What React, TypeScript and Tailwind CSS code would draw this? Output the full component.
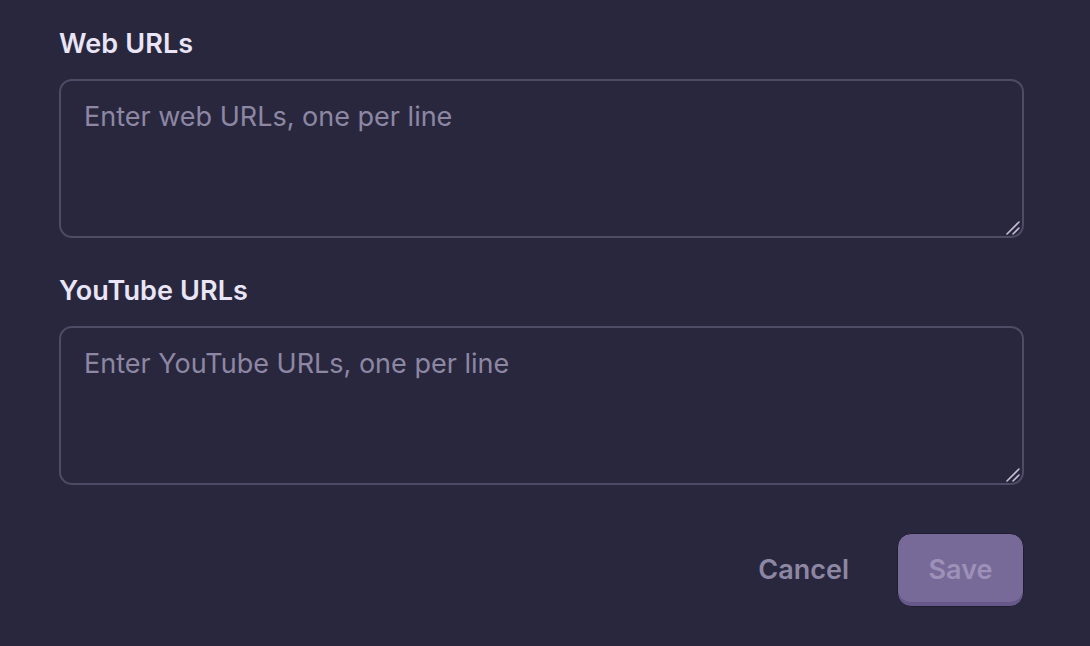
import React, { useState } from "react";

function UrlField({
  label,
  placeholder,
  value,
  onChange,
  className = "",
}: {
  label: string;
  placeholder: string;
  value: string;
  onChange: (v: string) => void;
  className?: string;
}) {
  return (
    <div className={`flex flex-col ${className}`}>
      <label className="mb-[18px] text-[27px] font-semibold leading-[34px] tracking-[0.1px] text-[#e9e5f6]">
        {label}
      </label>
      <div className="relative">
        <textarea
          value={value}
          onChange={(e) => onChange(e.target.value)}
          placeholder={placeholder}
          className="block h-[159px] w-full resize-none rounded-[13px] border-2 border-[#4f4b66] bg-transparent px-[23px] py-[16px] text-[27px] leading-[40px] text-[#ebe7f5] outline-none placeholder:text-[#8d87a3]"
        />
        {/* resize grip */}
        <svg
          className="pointer-events-none absolute bottom-[2px] right-[3px]"
          width="16"
          height="16"
          viewBox="0 0 16 16"
        >
          <line x1="2" y1="14" x2="14" y2="2" stroke="#c3bed3" strokeWidth="1.6" strokeLinecap="round" />
          <line x1="8" y1="14" x2="14" y2="8" stroke="#c3bed3" strokeWidth="1.6" strokeLinecap="round" />
        </svg>
      </div>
    </div>
  );
}

export default function App() {
  const [webUrls, setWebUrls] = useState("");
  const [ytUrls, setYtUrls] = useState("");

  return (
    <div
      className="min-h-screen w-full bg-[#29273e] text-[#ebe7f5]"
      style={{ fontFamily: "Inter, 'Noto Sans', sans-serif" }}
    >
      <div className="flex flex-col pl-[59px] pr-[66px] pt-[27px]">
        <UrlField
          label="Web URLs"
          placeholder="Enter web URLs, one per line"
          value={webUrls}
          onChange={setWebUrls}
        />
        <UrlField
          className="mt-[36px]"
          label="YouTube URLs"
          placeholder="Enter YouTube URLs, one per line"
          value={ytUrls}
          onChange={setYtUrls}
        />

        {/* Footer buttons */}
        <div className="mt-[48px] flex items-center justify-end gap-[24px]">
          <button
            type="button"
            className="h-[74px] rounded-[14px] px-[24px] text-[27px] font-semibold text-[#8d87a3]"
          >
            Cancel
          </button>
          <button
            type="button"
            disabled
            className="h-[74px] w-[127px] rounded-[14px] border border-[#1f1d30] bg-[#786a98] text-[27px] font-semibold text-[#9d91b8] shadow-[inset_0_-4px_0_#66598a]"
          >
            Save
          </button>
        </div>
      </div>
    </div>
  );
}
